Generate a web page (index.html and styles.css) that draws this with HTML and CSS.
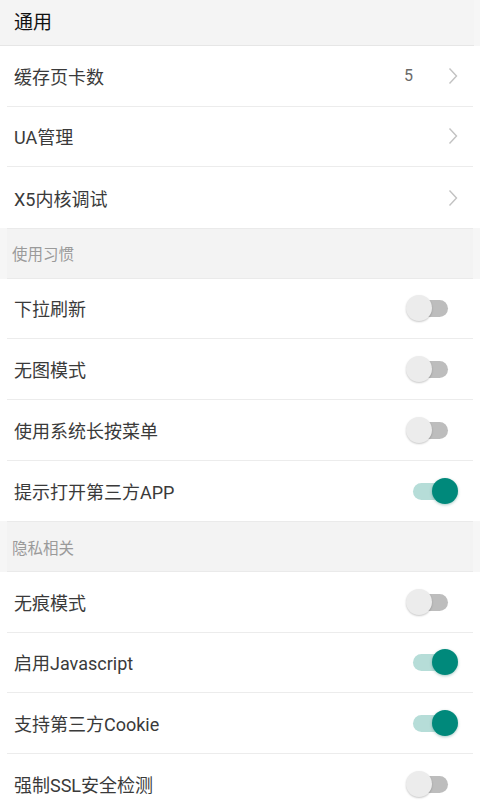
FILE: index.html
```html
<!DOCTYPE html>
<html lang="zh-CN">
<head>
<meta charset="utf-8">
<title>设置</title>
<link rel="stylesheet" href="styles.css">
</head>
<body>
<div class="page">
  <div class="top-header">通用</div>
  <div class="group">
    <div class="row">
      <span class="label">缓存页卡数</span>
      <span class="value">5</span>
      <svg class="chev" viewBox="0 0 10 18" width="10" height="18"><path d="M1.5 1.5 L8.5 9 L1.5 16.5" fill="none" stroke="#c2c2c2" stroke-width="1.4"/></svg>
    </div>
    <div class="row">
      <span class="label">UA管理</span>
      <svg class="chev" viewBox="0 0 10 18" width="10" height="18"><path d="M1.5 1.5 L8.5 9 L1.5 16.5" fill="none" stroke="#c2c2c2" stroke-width="1.4"/></svg>
    </div>
    <div class="row last">
      <span class="label">X5内核调试</span>
      <svg class="chev" viewBox="0 0 10 18" width="10" height="18"><path d="M1.5 1.5 L8.5 9 L1.5 16.5" fill="none" stroke="#c2c2c2" stroke-width="1.4"/></svg>
    </div>
  </div>
  <div class="section">使用习惯</div>
  <div class="group">
    <div class="row"><span class="label">下拉刷新</span><span class="switch"><span class="track"></span><span class="thumb"></span></span></div>
    <div class="row"><span class="label">无图模式</span><span class="switch"><span class="track"></span><span class="thumb"></span></span></div>
    <div class="row"><span class="label">使用系统长按菜单</span><span class="switch"><span class="track"></span><span class="thumb"></span></span></div>
    <div class="row last"><span class="label">提示打开第三方APP</span><span class="switch on"><span class="track"></span><span class="thumb"></span></span></div>
  </div>
  <div class="section">隐私相关</div>
  <div class="group">
    <div class="row"><span class="label">无痕模式</span><span class="switch"><span class="track"></span><span class="thumb"></span></span></div>
    <div class="row"><span class="label">启用Javascript</span><span class="switch on"><span class="track"></span><span class="thumb"></span></span></div>
    <div class="row"><span class="label">支持第三方Cookie</span><span class="switch on"><span class="track"></span><span class="thumb"></span></span></div>
    <div class="row last"><span class="label">强制SSL安全检测</span><span class="switch"><span class="track"></span><span class="thumb"></span></span></div>
  </div>
</div>
</body>
</html>
```
FILE: styles.css
```css
* { box-sizing: border-box; }
html, body {
  margin: 0;
  padding: 0;
  background: #f6f6f6;
}
body {
  font-family: Roboto, "Noto Sans CJK SC", "Noto Sans", sans-serif;
  width: 480px;
  height: 800px;
  overflow: hidden;
}
.page {
  display: flex;
  flex-direction: column;
}
.top-header {
  height: 46px;
  background: #f4f4f4;
  color: #111;
  font-size: 19px;
  padding-left: 14px;
  display: flex;
  align-items: center;
  border-bottom: 1px solid #e6e6e6;
  margin: 0 6px 0 0;
  padding-bottom: 4px;
}
.group {
  background: #fff;
  display: flex;
  flex-direction: column;
}
.row {
  height: 60.67px;
  display: flex;
  align-items: center;
  margin: 0 7px;
  padding: 0 15px 0 7px;
  border-bottom: 1px solid #ececec;
}
.row.last { border-bottom: none; }
.label {
  flex: 1;
  font-size: 18px;
  color: #3a3a3a;
}
.value {
  font-size: 16px;
  color: #6a6a6a;
  margin-right: 35px;
}
.chev { display: block; margin-right: 0; }
.section {
  height: 50.7px;
  background: #f3f3f3;
  color: #9a9a9a;
  font-size: 15.5px;
  display: flex;
  align-items: center;
  padding-left: 5px;
  margin: 0 7px;
  border-top: 1px solid #eaeaea;
  border-bottom: 1px solid #eaeaea;
}
.switch {
  position: relative;
  width: 52px;
  height: 26px;
}
.track {
  position: absolute;
  left: 4px;
  top: 5px;
  width: 38px;
  height: 17px;
  border-radius: 9px;
  background: #bdbdbd;
}
.thumb {
  position: absolute;
  left: 0;
  top: 0;
  width: 26px;
  height: 26px;
  border-radius: 50%;
  background: #ececec;
  box-shadow: 0 1px 2px rgba(0,0,0,0.22);
}
.switch.on .track {
  background: #b6ddd8;
  left: 7px;
  width: 36px;
}
.switch.on .thumb {
  left: 26px;
  background: #00897b;
  box-shadow: 0 1px 3px rgba(0,100,90,0.35);
}
```
